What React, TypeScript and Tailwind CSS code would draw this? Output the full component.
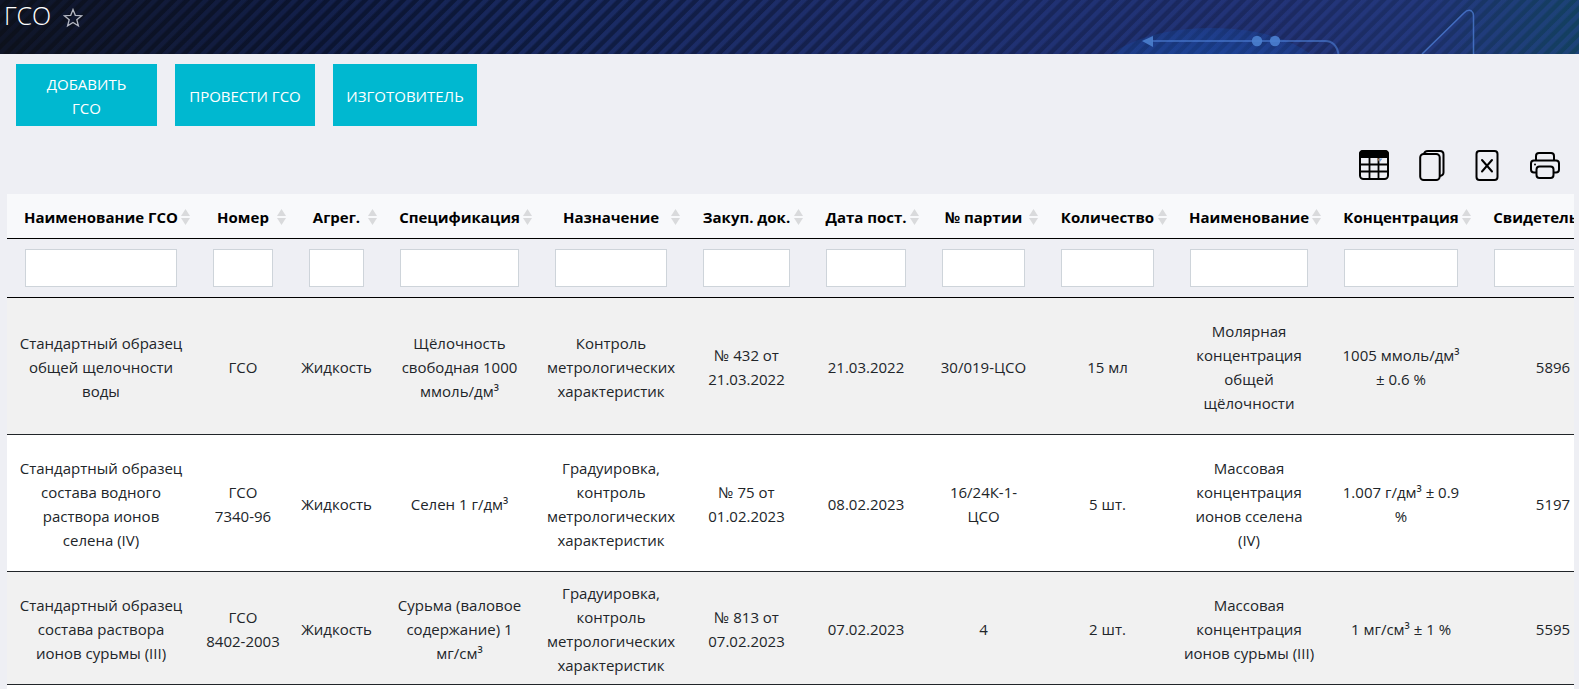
import React from "react";

type Column = { title: string; width: number };

const columns: Column[] = [
  { title: "Наименование ГСО", width: 188 },
  { title: "Номер", width: 96 },
  { title: "Агрег.", width: 91 },
  { title: "Спецификация", width: 155 },
  { title: "Назначение", width: 148 },
  { title: "Закуп. док.", width: 123 },
  { title: "Дата пост.", width: 116 },
  { title: "№ партии", width: 119 },
  { title: "Количество", width: 129 },
  { title: "Наименование", width: 154 },
  { title: "Концентрация", width: 150 },
  { title: "Свидетельство", width: 154 },
];

const rows: { height: string; cells: string[] }[] = [
  {
    height: "h-[137px]",
    cells: [
      "Стандартный образец\nобщей щелочности\nводы",
      "ГСО",
      "Жидкость",
      "Щёлочность\nсвободная 1000\nммоль/дм³",
      "Контроль\nметрологических\nхарактеристик",
      "№ 432 от\n21.03.2022",
      "21.03.2022",
      "30/019-ЦСО",
      "15 мл",
      "Молярная\nконцентрация\nобщей\nщёлочности",
      "1005 ммоль/дм³\n± 0.6 %",
      "5896",
    ],
  },
  {
    height: "h-[137px]",
    cells: [
      "Стандартный образец\nсостава водного\nраствора ионов\nселена (IV)",
      "ГСО\n7340-96",
      "Жидкость",
      "Селен 1 г/дм³",
      "Градуировка,\nконтроль\nметрологических\nхарактеристик",
      "№ 75 от\n01.02.2023",
      "08.02.2023",
      "16/24К-1-\nЦСО",
      "5 шт.",
      "Массовая\nконцентрация\nионов сселена\n(IV)",
      "1.007 г/дм³ ± 0.9\n%",
      "5197",
    ],
  },
  {
    height: "h-[113px]",
    cells: [
      "Стандартный образец\nсостава раствора\nионов сурьмы (III)",
      "ГСО\n8402-2003",
      "Жидкость",
      "Сурьма (валовое\nсодержание) 1\nмг/см³",
      "Градуировка,\nконтроль\nметрологических\nхарактеристик",
      "№ 813 от\n07.02.2023",
      "07.02.2023",
      "4",
      "2 шт.",
      "Массовая\nконцентрация\nионов сурьмы (III)",
      "1 мг/см³ ± 1 %",
      "5595",
    ],
  },
];

const tableWidth = columns.reduce((sum, c) => sum + c.width, 0);

function HeaderArt() {
  return (
    <svg className="absolute inset-y-0 right-0" width="500" height="54" viewBox="0 0 500 54" aria-hidden="true">
      <defs>
        <radialGradient id="glow">
          <stop offset="0" stopColor="#1458c0" stopOpacity=".6" />
          <stop offset="1" stopColor="#1458c0" stopOpacity=".22" />
        </radialGradient>
      </defs>
      <ellipse cx="132" cy="82" rx="116" ry="54" fill="url(#glow)" />
      <g stroke="#4d7fd6" fill="none">
        <path d="M73 41H246Q257 41 259.500 54" strokeWidth="2" opacity=".6" />
        <path d="M343 54L385 13Q389 9 392.500 11Q394.500 12.500 394.500 16V54" strokeWidth="1.500" opacity=".75" />
      </g>
      <g fill="#4b80cf" opacity=".9">
        <path d="M63 41L74 36V47Z" />
        <circle cx="178" cy="41" r="5.200" />
        <circle cx="196" cy="41" r="5.200" />
      </g>
    </svg>
  );
}

function StarIcon() {
  return (
    <svg width="20" height="20" viewBox="0 0 20 20" fill="none" stroke="#b4b7c2" strokeWidth="1.300">
      <path d="M10 1.500L12.300 7.300L18.600 7.700L13.800 11.700L15.400 17.800L10 14.500L4.600 17.800L6.200 11.700L1.400 7.700L7.700 7.300Z" />
    </svg>
  );
}

function GridIcon() {
  return (
    <svg width="30" height="30" viewBox="0 0 30 30" fill="none" stroke="#000" strokeWidth="2">
      <rect x="1" y="1" width="28" height="28" rx="3.500" />
      <path d="M1 7V4Q1 1 4 1H26Q29 1 29 4V7Z" fill="#000" />
      <path d="M1 14.500H29M1 21.500H29M10.500 7V29M19.500 7V29" strokeWidth="1.800" />
      <path d="M18 8.500H20.500V12.500Z" fill="#a9794f" stroke="none" />
      <path d="M20.500 8.500H23.500L20.500 12.500Z" fill="#6d9bd6" stroke="none" />
    </svg>
  );
}

function CopyIcon() {
  return (
    <svg width="26" height="32" viewBox="0 0 26 32" fill="none" stroke="#000" strokeWidth="2">
      <rect x="1.200" y="5" width="19.500" height="26" rx="3.500" />
      <path d="M5 5Q5.500 2 9 2H21Q24.500 2 24.500 5.500V23.500Q24.500 26.500 20.500 27" />
    </svg>
  );
}

function ExcelIcon() {
  return (
    <svg width="24" height="32" viewBox="0 0 24 32" fill="none" stroke="#000" strokeWidth="2">
      <rect x="1.500" y="2" width="21" height="29" rx="3" />
      <path d="M7 11L17 22.500M17 11L7 22.500" strokeLinecap="round" />
    </svg>
  );
}

function PrinterIcon() {
  return (
    <svg width="32" height="28" viewBox="0 0 32 28" fill="none" stroke="#000" strokeWidth="2">
      <path d="M7 9.500V5Q7 2 10 2H22Q25 2 25 5V9.500" />
      <path d="M7 21.500H5Q2 21.500 2 18.500V12.500Q2 9.500 5 9.500H27Q30 9.500 30 12.500V18.500Q30 21.500 27 21.500H25" />
      <rect x="7.500" y="15.500" width="17" height="11.500" rx="3" />
      <circle cx="6" cy="13.500" r="1" fill="#000" stroke="none" />
    </svg>
  );
}

function SortIcon() {
  return (
    <svg width="9" height="16" viewBox="0 0 9 16" fill="#d9dadc" aria-hidden="true">
      <path d="M4.500 0L9 7H0Z" />
      <path d="M0 9H9L4.500 16Z" />
    </svg>
  );
}

function ActionButton({ children, className }: { children: React.ReactNode; className: string }) {
  return (
    <button type="button" className={`flex h-[62px] items-center justify-center bg-[#00b8d0] px-3 pt-[2px] text-[15px] leading-6 text-white ${className}`}>
      {children}
    </button>
  );
}

export default function App() {
  return (
    <div className="flex h-screen flex-col overflow-hidden bg-[#eeeff4] font-['Open_Sans','Noto_Sans',sans-serif] text-[#212529]">
      <header className="relative h-[54px] shrink-0 bg-[linear-gradient(90deg,#0d111c_0%,#0b1430_20%,#0e1b40_35%,#14204c_50%,#18265a_65%,#1c2a62_82%,#1c3068_91%,#134060_100%)]">
        <div className="absolute inset-0 bg-[repeating-linear-gradient(135deg,rgba(50,75,170,0.32)_0px,rgba(50,75,170,0.32)_3px,transparent_5px,transparent_8px,rgba(50,75,170,0.32)_9px)] mask-[linear-gradient(90deg,rgba(0,0,0,0.25),black_35%)]" />
        <HeaderArt />
        <div className="relative flex items-start gap-3 pl-1">
          <h1 className="text-[25px] leading-[30px] font-light text-white">ГСО</h1>
          <button type="button" aria-label="Избранное" className="pt-2">
            <StarIcon />
          </button>
        </div>
      </header>

      <div className="flex shrink-0 gap-[18px] px-4 pt-[10px]">
        <ActionButton className="w-[141px]">
          ДОБАВИТЬ
          <br />
          ГСО
        </ActionButton>
        <ActionButton className="w-[140px]">ПРОВЕСТИ ГСО</ActionButton>
        <ActionButton className="w-[144px]">ИЗГОТОВИТЕЛЬ</ActionButton>
      </div>

      <div className="flex h-[68px] shrink-0 items-center justify-end gap-[30px] pt-[10px] pr-[18px]">
        <button type="button" aria-label="Столбцы"><GridIcon /></button>
        <button type="button" aria-label="Копировать"><CopyIcon /></button>
        <button type="button" aria-label="Excel"><ExcelIcon /></button>
        <button type="button" aria-label="Печать"><PrinterIcon /></button>
      </div>

      <main className="mr-[5px] ml-[7px] min-h-0 flex-1 overflow-hidden">
        <table className="table-fixed border-separate border-spacing-0 text-center text-[15px] leading-6" style={{ width: tableWidth }}>
          <colgroup>
            {columns.map((c, i) => (
              <col key={i} style={{ width: c.width }} />
            ))}
          </colgroup>
          <thead>
            <tr className="bg-[#f8f9fb] text-black">
              {columns.map((c, i) => (
                <th key={i} className="relative h-[45px] border-b border-black p-0 pt-[2px] font-bold whitespace-nowrap">
                  {c.title}
                  <span className="absolute top-[15px] right-[5px]">
                    <SortIcon />
                  </span>
                </th>
              ))}
            </tr>
            <tr>
              {columns.map((c, i) => (
                <th key={i} className="h-[59px] border-b border-black px-[18px] py-[10px]">
                  <input aria-label={c.title} className="block h-[38px] w-full border border-[#ced4da] bg-white px-2 font-normal" />
                </th>
              ))}
            </tr>
          </thead>
          <tbody>
            {rows.map((row, r) => (
              <tr key={r} className="odd:bg-[#f1f1f1] even:bg-white">
                {row.cells.map((cell, i) => (
                  <td key={i} className={`${row.height} border-b border-[#212529] p-0 pt-[2px] align-middle whitespace-pre`}>
                    {cell}
                  </td>
                ))}
              </tr>
            ))}
            <tr className="bg-white">
              <td colSpan={columns.length} className="h-16" />
            </tr>
          </tbody>
        </table>
      </main>
    </div>
  );
}
